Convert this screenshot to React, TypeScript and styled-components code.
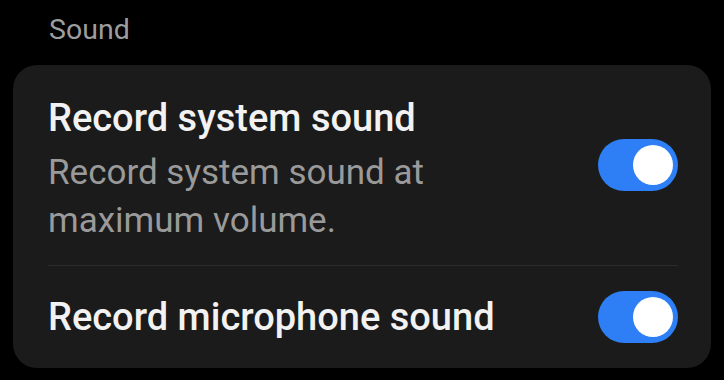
import React from 'react';
import styled, { createGlobalStyle } from 'styled-components';

const GlobalStyle = createGlobalStyle`
  body {
    margin: 0;
    background: #000;
    font-family: Roboto, "Noto Sans", "Liberation Sans", sans-serif;
  }
`;

const Page = styled.div`
  width: 724px;
  height: 380px;
  background: #000;
  overflow: hidden;
`;

const SectionLabel = styled.div`
  padding: 13px 0 0 49px;
  height: 65px;
  box-sizing: border-box;
  font-size: 28.5px;
  line-height: 34px;
  color: #9d9d9d;
`;

const Card = styled.div`
  margin: 0 13px;
  background: #1b1b1b;
  border-radius: 24px;
  padding: 0 33px 0 35px;
`;

const Row = styled.div<{ $height: number }>`
  display: flex;
  align-items: center;
  justify-content: space-between;
  height: ${({ $height }) => $height}px;
  gap: 24px;
`;

const Divider = styled.div`
  height: 1px;
  background: #2c2c2c;
`;

const TextBlock = styled.div`
  display: flex;
  flex-direction: column;
  margin-top: 8px;
`;

const Title = styled.div`
  font-size: 38px;
  font-weight: 500;
  line-height: 48px;
  color: #f2f2f2;
`;

const Subtitle = styled.div`
  margin-top: 7px;
  font-size: 35px;
  line-height: 48px;
  color: #9a9a9a;
  max-width: 440px;
`;

const Track = styled.div<{ $on: boolean }>`
  width: 80px;
  height: 52px;
  border-radius: 26px;
  background: ${({ $on }) => ($on ? '#2e7ef5' : '#555')};
  display: flex;
  align-items: center;
  justify-content: ${({ $on }) => ($on ? 'flex-end' : 'flex-start')};
  padding: 0 5px;
  box-sizing: border-box;
  flex-shrink: 0;
`;

const Knob = styled.div`
  width: 40px;
  height: 40px;
  border-radius: 50%;
  background: #fff;
`;

const Toggle: React.FC<{ on: boolean }> = ({ on }) => (
  <Track $on={on}>
    <Knob />
  </Track>
);

const App: React.FC = () => (
  <Page>
    <GlobalStyle />
    <SectionLabel>Sound</SectionLabel>
    <Card>
      <Row $height={200}>
        <TextBlock>
          <Title>Record system sound</Title>
          <Subtitle>Record system sound at maximum volume.</Subtitle>
        </TextBlock>
        <Toggle on />
      </Row>
      <Divider />
      <Row $height={102}>
        <Title>Record microphone sound</Title>
        <Toggle on />
      </Row>
    </Card>
  </Page>
);

export default App;
